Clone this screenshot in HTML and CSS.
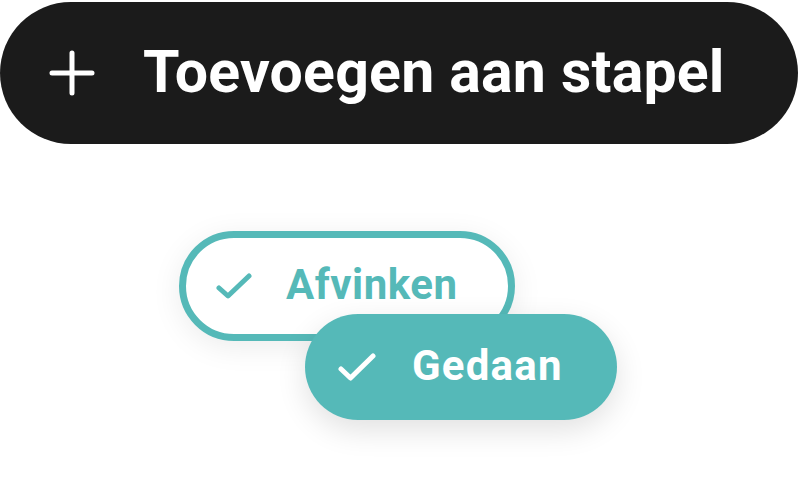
FILE: index.html
```html
<!DOCTYPE html>
<html lang="nl">
<head>
    <meta charset="UTF-8">
    <meta name="viewport" content="width=device-width, initial-scale=1.0">
    <title>Knoppen</title>
    <link rel="stylesheet" href="styles.css">
</head>
<body>
    <!-- Add to stack -->
    <button class="add-btn">
        <svg class="plus" viewBox="0 0 46 46" width="46" height="46">
            <path d="M23 3 V43 M3 23 H43" stroke="#fff" stroke-width="5" stroke-linecap="round" fill="none"/>
        </svg>
        <span>Toevoegen aan stapel</span>
    </button>

    <!-- Check states -->
    <div class="states">
        <button class="pill pill-outline">
            <svg class="check" viewBox="0 0 36 26" width="36" height="26">
                <path d="M3 15 L12 23 L33 3" stroke="currentColor" stroke-width="5" stroke-linecap="round" stroke-linejoin="round" fill="none"/>
            </svg>
            <span>Afvinken</span>
        </button>
        <button class="pill pill-filled">
            <svg class="check" viewBox="0 0 38 28" width="38" height="28">
                <path d="M3 16 L12.5 25 L35 3" stroke="currentColor" stroke-width="5" stroke-linecap="round" stroke-linejoin="round" fill="none"/>
            </svg>
            <span>Gedaan</span>
        </button>
    </div>
</body>
</html>
```

FILE: styles.css
```css
* { box-sizing: border-box; margin: 0; padding: 0; font-family: Roboto, "Liberation Sans", sans-serif; }
body { background: #fff; width: 800px; height: 497px; overflow: hidden; }

button { border: none; cursor: pointer; font-weight: 700; display: flex; align-items: center; }

/* Big black button */
.add-btn {
    margin-top: 2px; width: 798px; height: 142px; border-radius: 71px;
    background: #1b1b1b; color: #fff; padding-left: 49px; gap: 48px;
    font-size: 59px; letter-spacing: 0.2px;
}
.add-btn span { margin-top: -4px; }

/* Check state pills */
.states { display: flex; flex-direction: column; align-items: flex-start; padding: 87px 0 0 179px; }

.pill { border-radius: 60px; font-size: 42px; }
.pill-outline {
    width: 336px; height: 110px; background: #fff; color: #55b9b8;
    border: 7px solid #55b9b8; padding-left: 30px; gap: 34px; letter-spacing: 0.5px;
    box-shadow: 0 6px 30px rgba(0, 0, 0, 0.08);
}
.pill-filled {
    width: 312px; height: 106px; background: #55b9b8; color: #fff;
    margin: -27px 0 0 126px; padding-left: 33px; gap: 36px; letter-spacing: 1.2px;
    position: relative; /* sits over the outline pill */
    box-shadow: 0 10px 30px rgba(0, 0, 0, 0.12);
}
.pill span { margin-top: -3px; }
```
